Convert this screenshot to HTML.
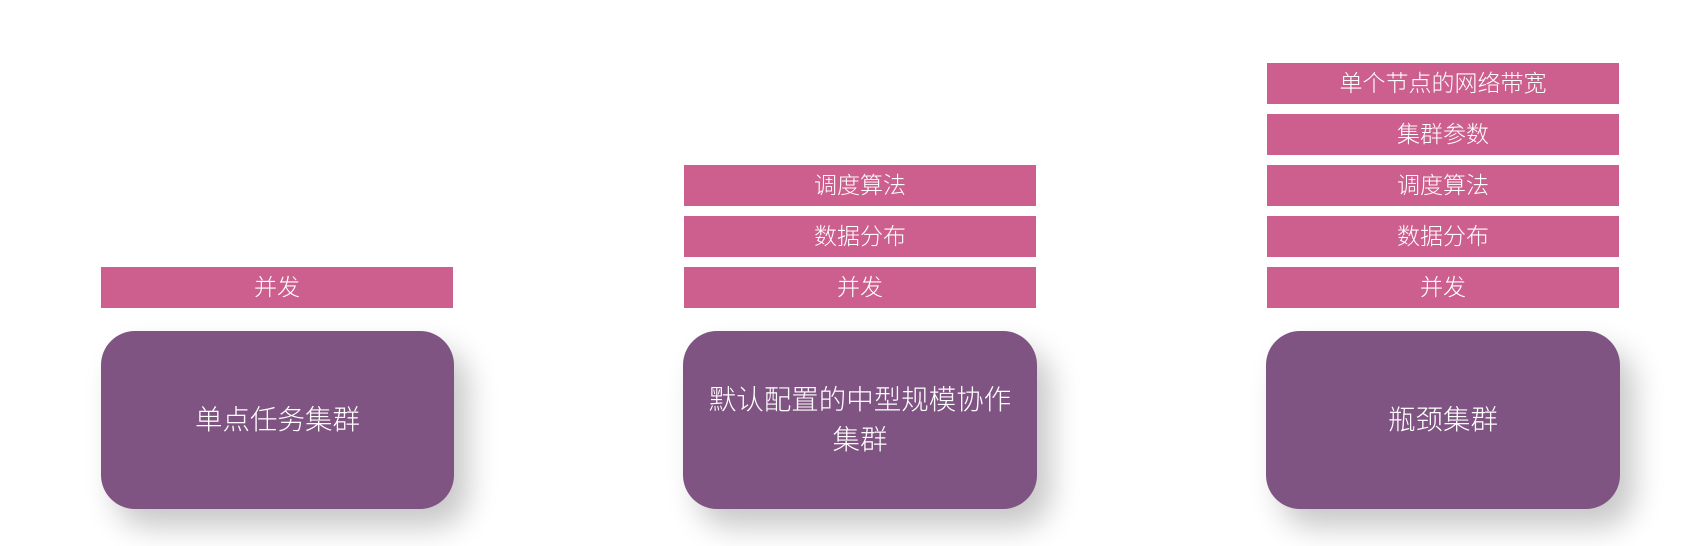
<!DOCTYPE html>
<html><head><meta charset="utf-8"><style>
html,body{margin:0;padding:0;background:#fff;width:1698px;height:546px;overflow:hidden;font-family:"Liberation Sans","Noto Sans CJK SC",sans-serif;}
.bar{position:absolute;height:41px;background:#cd5f8e;color:#fff;font-size:23px;line-height:41px;text-align:center;font-weight:300;}
.box{position:absolute;top:331px;height:178px;background:#7f5482;border-radius:34px;color:#fff;font-size:27.5px;line-height:40px;display:flex;align-items:center;justify-content:center;text-align:center;box-shadow:14px 18px 30px rgba(0,0,0,0.22);box-sizing:border-box;white-space:nowrap;font-weight:300;}
</style></head><body>
<div class="bar" style="left:101px;width:352px;top:267px">并发</div>
<div class="box" style="left:101px;width:353px">单点任务集群</div>

<div class="bar" style="left:684px;width:352px;top:165px">调度算法</div>
<div class="bar" style="left:684px;width:352px;top:216px">数据分布</div>
<div class="bar" style="left:684px;width:352px;top:267px">并发</div>
<div class="box" style="left:683px;width:354px">默认配置的中型规模协作<br>集群</div>

<div class="bar" style="left:1267px;width:352px;top:63px">单个节点的网络带宽</div>
<div class="bar" style="left:1267px;width:352px;top:114px">集群参数</div>
<div class="bar" style="left:1267px;width:352px;top:165px">调度算法</div>
<div class="bar" style="left:1267px;width:352px;top:216px">数据分布</div>
<div class="bar" style="left:1267px;width:352px;top:267px">并发</div>
<div class="box" style="left:1266px;width:354px">瓶颈集群</div>
</body></html>
